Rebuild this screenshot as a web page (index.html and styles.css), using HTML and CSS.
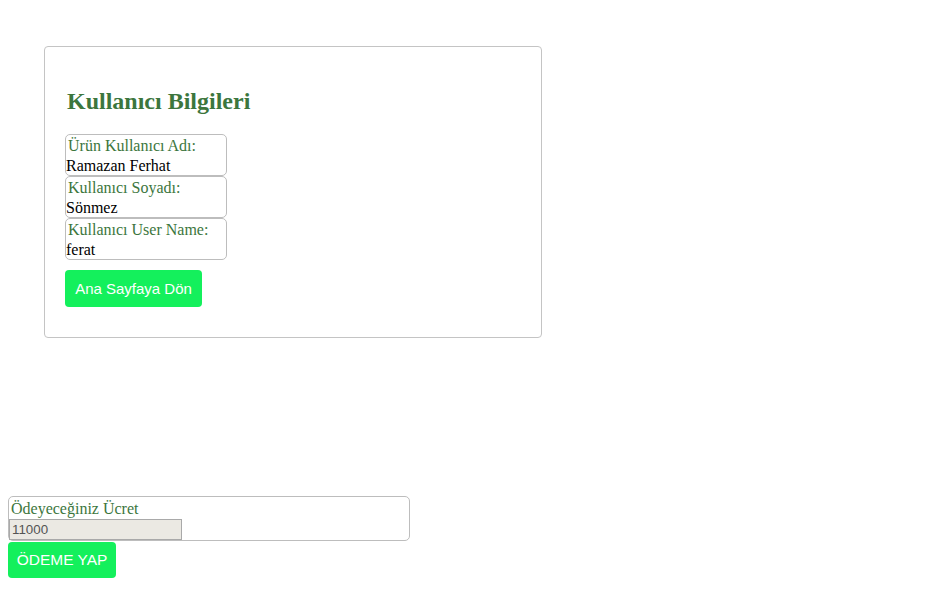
FILE: index.html
```html
<!DOCTYPE html>
<html>
<head>
<meta charset="utf-8">
<link rel="stylesheet" href="styles.css">
</head>
<body>
<div class="card">
  <h2 class="title">Kullanıcı Bilgileri</h2>
  <div class="field">
    <div class="label">Ürün Kullanıcı Adı:</div>
    <div class="value">Ramazan Ferhat</div>
  </div>
  <div class="field">
    <div class="label">Kullanıcı Soyadı:</div>
    <div class="value">Sönmez</div>
  </div>
  <div class="field">
    <div class="label">Kullanıcı User Name:</div>
    <div class="value">ferat</div>
  </div>
  <button class="btn btn-home">Ana Sayfaya Dön</button>
</div>
<div class="pay">
  <div class="pay-label">Ödeyeceğiniz Ücret</div>
  <input class="pay-input" type="text" value="11000" disabled>
</div>
<button class="btn btn-pay">ÖDEME YAP</button>
</body>
</html>
```
FILE: styles.css
```css
body {
  margin: 8px;
  font-family: "Liberation Serif", serif;
  font-size: 16px;
  background: #fff;
}
.card {
  margin: 38px 0 0 36px;
  width: 456px;
  border: 1px solid #c4c4c4;
  border-radius: 4px;
  padding: 20px 20px 30px 20px;
}
.title {
  margin: 20px 0 19px 2px;
  font-size: 24px;
  line-height: 28px;
  color: #3c763d;
  font-weight: bold;
}
.field {
  box-sizing: border-box;
  width: 162px;
  height: 42px;
  border: 1px solid #bdbdbd;
  border-radius: 5px;
  padding-top: 1px;
}
.label {
  color: #3c763d;
  line-height: 20px;
  padding-left: 2px;
}
.value {
  color: #000;
  line-height: 20px;
}
.btn {
  display: block;
  border: none;
  background: #14f05c;
  color: #fff;
  font-family: "Liberation Sans", Arial, sans-serif;
  border-radius: 4px;
  cursor: pointer;
}
.btn-home {
  margin-top: 10px;
  width: 137px;
  height: 37px;
  font-size: 15px;
}
.pay {
  margin-top: 158px;
  width: 400px;
  height: 43px;
  border: 1px solid #bdbdbd;
  border-radius: 5px;
}
.pay-label {
  color: #3c763d;
  line-height: 21px;
  padding-left: 2px;
  padding-top: 1px;
}
.pay-input {
  display: block;
  box-sizing: border-box;
  width: 173px;
  height: 21px;
  margin: 0;
  border: 1px solid #a9a9a9;
  background: #ebe9e3;
  color: #545454;
  font-family: "Liberation Sans", Arial, sans-serif;
  font-size: 13.33px;
  padding: 1px 2px;
}
.btn-pay {
  margin-top: 1px;
  width: 108px;
  height: 36px;
  font-size: 15.5px;
}
```
